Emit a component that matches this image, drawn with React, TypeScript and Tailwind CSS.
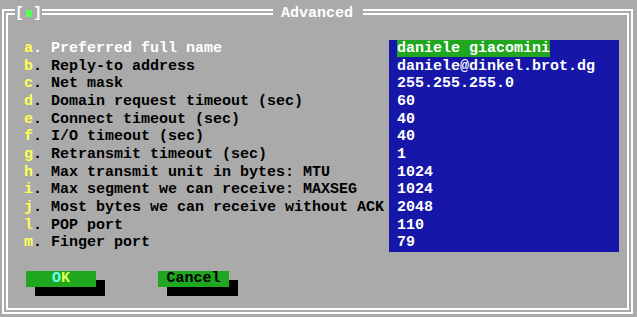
const fields = [
  { key: "a", label: "Preferred full name", value: "daniele giacomini" },
  { key: "b", label: "Reply-to address", value: "daniele@dinkel.brot.dg" },
  { key: "c", label: "Net mask", value: "255.255.255.0" },
  { key: "d", label: "Domain request timeout (sec)", value: "60" },
  { key: "e", label: "Connect timeout (sec)", value: "40" },
  { key: "f", label: "I/O timeout (sec)", value: "40" },
  { key: "g", label: "Retransmit timeout (sec)", value: "1" },
  { key: "h", label: "Max transmit unit in bytes: MTU", value: "1024" },
  { key: "i", label: "Max segment we can receive: MAXSEG", value: "1024" },
  { key: "j", label: "Most bytes we can receive without ACK", value: "2048" },
  { key: "l", label: "POP port", value: "110" },
  { key: "m", label: "Finger port", value: "79" },
];

export default function App() {
  return (
    <div
      className="relative w-[637px] h-[317px] overflow-hidden bg-[#aaaaaa] pl-[2px] pt-[9px] text-[15px] leading-[17.67px] font-bold whitespace-pre"
      style={{ fontFamily: '"Liberation Mono", "DejaVu Sans Mono", monospace' }}
    >
      {/* double frame */}
      <div className="w-[631px] h-[305px] border-2 border-white p-[2px]">
        <div className="relative h-full border-2 border-white pl-[16px] pt-[25px]">
          {/* fields */}
          <div className="flex">
            <div className="w-[365px]">
              {fields.map((f, i) => (
                <div key={f.key} className={`h-[17.67px] ${i === 0 ? "text-white" : "text-black"}`}>
                  <span className="text-[#ffff55]">{f.key}</span>
                  {". " + f.label}
                </div>
              ))}
            </div>
            <div className="w-[230px] bg-[#1616a8] pl-[8px] text-white">
              {fields.map((f, i) => (
                <div key={f.key} className="h-[17.67px]">
                  <span className={i === 0 ? "bg-[#1fa81f]" : ""}>{f.value}</span>
                </div>
              ))}
            </div>
          </div>

          {/* buttons */}
          <div className="flex mt-[19px] ml-[2px] gap-[62px]">
            <div className="w-[70px] h-[16px] leading-[16px] bg-[#1fa81f] text-center shadow-[9px_9px_0_#000]">
              <span className="text-[#66ffee]">O</span>
              <span className="text-[#ddff55]">K</span>
            </div>
            <div className="w-[71px] h-[16px] leading-[16px] bg-[#1fa81f] text-center text-black shadow-[9px_9px_0_#000]">
              Cancel
            </div>
          </div>
        </div>
      </div>

      {/* close box over the top border */}
      <div className="absolute left-[15px] top-[4.66px] h-[17.67px] w-[27px] bg-[#aaaaaa] flex items-center text-white">
        <span className="w-[9px]">[</span>
        <span className="w-[9px] flex justify-center">
          <span className="block w-[6px] h-[7px] bg-[#55ff55]" />
        </span>
        <span className="w-[9px]">]</span>
      </div>

      {/* title over the top border */}
      <div className="absolute left-[273px] top-[4.66px] h-[17.67px] w-[90px] bg-[#aaaaaa] pl-[8px] text-white">
        Advanced
      </div>
    </div>
  );
}
